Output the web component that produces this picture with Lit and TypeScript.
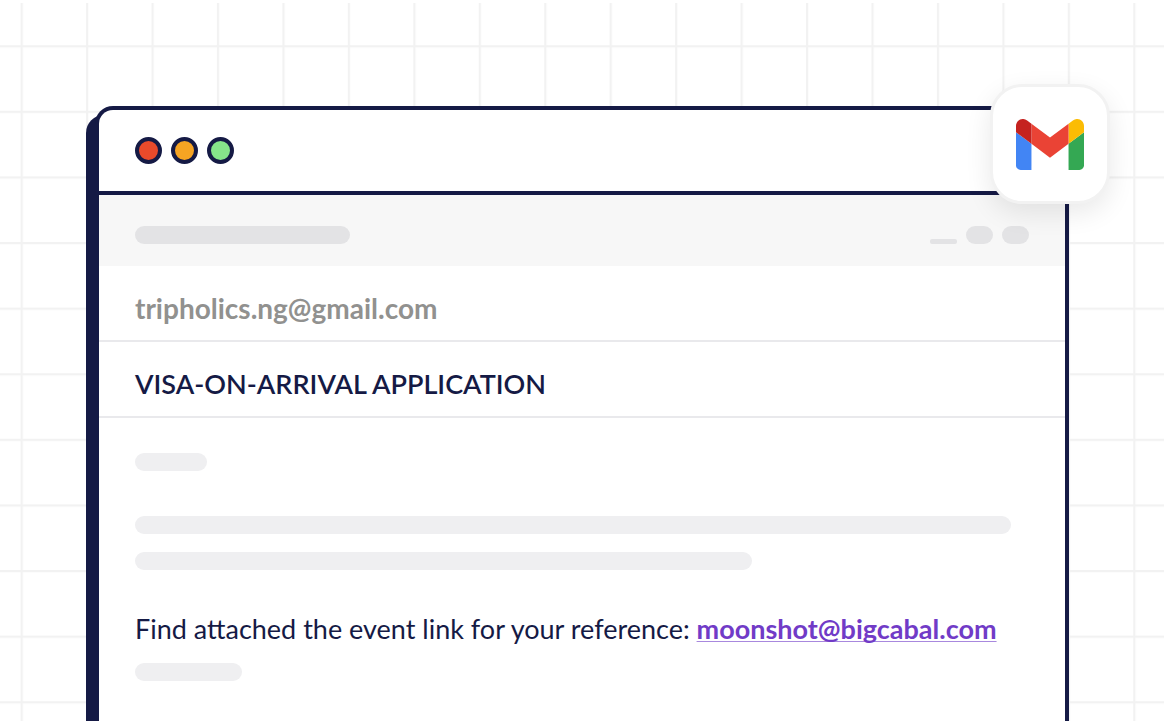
import { LitElement, html, css, svg } from "lit";
import { customElement, property } from "lit/decorators.js";

@customElement("grid-backdrop")
class GridBackdrop extends LitElement {
  static styles = css`
    :host {
      position: absolute;
      inset: 3px 0 0 0;
      z-index: -1;
    }
    .grid {
      display: block;
      width: 100%;
      height: 100%;
    }
    .line {
      fill: #f2f2f2;
    }
  `;

  render() {
    return html`
      <svg class="grid" aria-hidden="true">
        <defs>
          <pattern id="cell" x="20.6" y="42.2" width="65.45" height="65.6" patternUnits="userSpaceOnUse">
            ${svg`
              <rect class="line" width="2.2" height="65.6"></rect>
              <rect class="line" width="65.45" height="2.2"></rect>
            `}
          </pattern>
        </defs>
        <rect width="100%" height="100%" fill="url(#cell)"></rect>
      </svg>
    `;
  }
}

@customElement("gmail-badge")
class GmailBadge extends LitElement {
  static styles = css`
    :host {
      display: grid;
      place-items: center;
      box-sizing: border-box;
      width: 120px;
      height: 120px;
      border: 3px solid #f2f2f2;
      border-radius: 32px;
      background: #fff;
      box-shadow: 0 9px 27px rgba(0, 0, 0, 0.09);
    }
    .logo {
      display: block;
      width: 68px;
      height: 51px;
    }
  `;

  render() {
    return html`
      <svg class="logo" viewBox="52 42 88 66" role="img" aria-label="Gmail">
        <path fill="#4285f4" d="M58 108h14V74L52 59v43c0 3.32 2.69 6 6 6" />
        <path fill="#34a853" d="M120 108h14c3.32 0 6-2.69 6-6V59l-20 15" />
        <path fill="#fbbc04" d="M120 48v26l20-15v-8c0-7.42-8.47-11.65-14.4-7.2" />
        <path fill="#ea4335" d="M72 74V48l24 18 24-18v26L96 92" />
        <path fill="#c5221f" d="M52 51v8l20 15V48l-5.6-4.2c-5.94-4.45-14.4-.22-14.4 7.2" />
      </svg>
    `;
  }
}

@customElement("placeholder-bar")
class PlaceholderBar extends LitElement {
  static styles = css`
    :host {
      display: block;
    }
    .bar {
      height: 18px;
      border-radius: 9px;
      background: var(--bar-color, #efeff1);
    }
  `;

  @property({ type: Number }) share = 100;

  render() {
    return html`<div class="bar" style="width: ${this.share}%"></div>`;
  }
}

@customElement("app-root")
class AppRoot extends LitElement {
  static styles = css`
    :host {
      --navy: #151a45;
      display: flex;
      flex-direction: column;
      position: relative;
      z-index: 0;
      box-sizing: border-box;
      height: 100vh;
      overflow: hidden;
      padding: 106px 95px 0;
      background: #fff;
      color: var(--navy);
      font-family: Lato, "Open Sans", sans-serif;
      font-size: 27px;
      line-height: 36px;
    }
    .window {
      position: relative;
      flex: 1;
      border: 4px solid var(--navy);
      border-bottom: 0;
      border-radius: 18px 18px 0 0;
      background: #fff;
      box-shadow: -9px 9px 0 var(--navy);
    }
    .badge {
      position: absolute;
      top: -26px;
      right: -45px;
    }
    .titlebar {
      display: flex;
      gap: 9px;
      padding: 27px 36px;
      border-bottom: 4px solid var(--navy);
    }
    .light {
      box-sizing: border-box;
      width: 27px;
      height: 27px;
      padding: 0;
      border: 4px solid var(--navy);
      border-radius: 50%;
    }
    .close {
      background: #e94a2b;
    }
    .minimise {
      background: #f6a423;
    }
    .expand {
      background: #86e58a;
    }
    .toolbar {
      --bar-color: #e3e3e5;
      display: flex;
      align-items: flex-end;
      gap: 9px;
      padding: 31px 36px 22px;
      background: #f7f7f7;
    }
    .heading {
      flex: 1;
    }
    .heading-bar {
      margin-right: -108px;
    }
    .pill {
      width: 27px;
      height: 18px;
      border-radius: 9px;
      background: var(--bar-color);
    }
    .dash {
      height: 5px;
      border-radius: 2px;
    }
    .field {
      margin: 0;
      padding: 24px 36px 14px;
      border-bottom: 2px solid #e9e9ec;
      font-size: inherit;
    }
    .sender {
      color: #91918f;
      font-size: 28px;
      font-weight: 700;
    }
    .subject {
      font-weight: 600;
    }
    .message {
      padding: 35px 36px 0;
    }
    .lines {
      display: grid;
      gap: 18px;
      margin: 45px 0 41px;
    }
    .note {
      margin: 0 0 16px;
    }
    .link {
      color: #713bc7;
      font-weight: 700;
      text-decoration: underline 1px #a888de;
      text-underline-offset: 2px;
      text-decoration-skip-ink: none;
    }
  `;

  render() {
    return html`
      <grid-backdrop></grid-backdrop>
      <main class="window">
        <header class="titlebar">
          <button class="light close" type="button" aria-label="Close"></button>
          <button class="light minimise" type="button" aria-label="Minimise"></button>
          <button class="light expand" type="button" aria-label="Expand"></button>
        </header>
        <div class="toolbar">
          <div class="heading">
            <placeholder-bar class="heading-bar" share="24"></placeholder-bar>
          </div>
          <span class="pill dash"></span>
          <span class="pill"></span>
          <span class="pill"></span>
        </div>
        <p class="field sender">tripholics.ng@gmail.com</p>
        <h1 class="field subject">VISA-ON-ARRIVAL APPLICATION</h1>
        <section class="message">
          <placeholder-bar share="8"></placeholder-bar>
          <div class="lines">
            <placeholder-bar share="98"></placeholder-bar>
            <placeholder-bar share="69"></placeholder-bar>
          </div>
          <p class="note">
            Find attached the event link for your reference:
            <a class="link" href="mailto:moonshot@bigcabal.com">moonshot@bigcabal.com</a>
          </p>
          <placeholder-bar share="12"></placeholder-bar>
        </section>
        <gmail-badge class="badge"></gmail-badge>
      </main>
    `;
  }
}
